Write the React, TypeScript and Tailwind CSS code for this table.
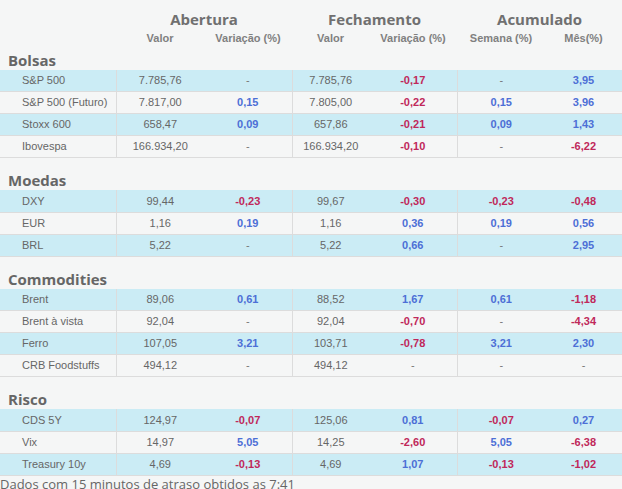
import React from 'react';

type Row = {
  name: string;
  abVal: string;
  abVar: string;
  feVal: string;
  feVar: string;
  sem: string;
  mes: string;
};

const sections: { title: string; rows: Row[] }[] = [
  {
    title: 'Bolsas',
    rows: [
      { name: 'S&P 500', abVal: '7.785,76', abVar: '-', feVal: '7.785,76', feVar: '-0,17', sem: '-', mes: '3,95' },
      { name: 'S&P 500 (Futuro)', abVal: '7.817,00', abVar: '0,15', feVal: '7.805,00', feVar: '-0,22', sem: '0,15', mes: '3,96' },
      { name: 'Stoxx 600', abVal: '658,47', abVar: '0,09', feVal: '657,86', feVar: '-0,21', sem: '0,09', mes: '1,43' },
      { name: 'Ibovespa', abVal: '166.934,20', abVar: '-', feVal: '166.934,20', feVar: '-0,10', sem: '-', mes: '-6,22' },
    ],
  },
  {
    title: 'Moedas',
    rows: [
      { name: 'DXY', abVal: '99,44', abVar: '-0,23', feVal: '99,67', feVar: '-0,30', sem: '-0,23', mes: '-0,48' },
      { name: 'EUR', abVal: '1,16', abVar: '0,19', feVal: '1,16', feVar: '0,36', sem: '0,19', mes: '0,56' },
      { name: 'BRL', abVal: '5,22', abVar: '-', feVal: '5,22', feVar: '0,66', sem: '-', mes: '2,95' },
    ],
  },
  {
    title: 'Commodities',
    rows: [
      { name: 'Brent', abVal: '89,06', abVar: '0,61', feVal: '88,52', feVar: '1,67', sem: '0,61', mes: '-1,18' },
      { name: 'Brent à vista', abVal: '92,04', abVar: '-', feVal: '92,04', feVar: '-0,70', sem: '-', mes: '-4,34' },
      { name: 'Ferro', abVal: '107,05', abVar: '3,21', feVal: '103,71', feVar: '-0,78', sem: '3,21', mes: '2,30' },
      { name: 'CRB Foodstuffs', abVal: '494,12', abVar: '-', feVal: '494,12', feVar: '-', sem: '-', mes: '-' },
    ],
  },
  {
    title: 'Risco',
    rows: [
      { name: 'CDS 5Y', abVal: '124,97', abVar: '-0,07', feVal: '125,06', feVar: '0,81', sem: '-0,07', mes: '0,27' },
      { name: 'Vix', abVal: '14,97', abVar: '5,05', feVal: '14,25', feVar: '-2,60', sem: '5,05', mes: '-6,38' },
      { name: 'Treasury 10y', abVal: '4,69', abVar: '-0,13', feVal: '4,69', feVar: '1,07', sem: '-0,13', mes: '-1,02' },
    ],
  },
];

// variation cell: blue when up, crimson when down, plain dash otherwise
const Change: React.FC<{ v: string; sep?: boolean }> = ({ v, sep }) => {
  const color = v === '-' ? 'text-[#777] font-normal' : v.startsWith('-') ? 'text-[#c0285a] font-bold' : 'text-[#4d6fd6] font-bold';
  return <td className={`text-center ${color} ${sep ? 'border-r border-[#dcdcdc]' : ''}`}>{v}</td>;
};

const Cols = () => (
  <colgroup>
    <col className="w-[116px]" />
    <col className="w-[88px]" />
    <col className="w-[88px]" />
    <col className="w-[77px]" />
    <col className="w-[88px]" />
    <col className="w-[88px]" />
    <col className="w-[77px]" />
  </colgroup>
);

const Section: React.FC<{ title: string; rows: Row[]; first?: boolean }> = ({ title, rows, first }) => (
  <div>
    <h2 className={`${first ? 'pt-[3px]' : 'pt-[12px]'} leading-[20px] pl-2 text-[15px] font-bold text-[#666] font-['Open_Sans',sans-serif]`}>
      {title}
    </h2>
    <table className="w-full table-fixed border-collapse text-[11px] text-[#666] font-['Liberation_Sans',Arial,sans-serif]">
      <Cols />
      <tbody>
        {rows.map((r, i) => (
          <tr key={r.name} className={`h-[22px] border-b border-[#dcdcdc] ${i % 2 === 0 ? 'bg-[#cbecf5]' : 'bg-[#f5f6f6]'}`}>
            <td className="pl-[22px] border-r border-[#dcdcdc] whitespace-nowrap">{r.name}</td>
            <td className="text-center">{r.abVal}</td>
            <Change v={r.abVar} sep />
            <td className="text-center">{r.feVal}</td>
            <Change v={r.feVar} sep />
            <Change v={r.sem} />
            <Change v={r.mes} />
          </tr>
        ))}
      </tbody>
    </table>
  </div>
);

export default function App() {
  return (
    <div className="w-[622px] h-[489px] overflow-hidden bg-[#f5f6f6]">
      <table className="w-full table-fixed border-collapse text-[#707070]">
        <Cols />
        <thead>
          <tr className="h-[30px] align-bottom">
            <th />
            <th colSpan={2} className="text-[15px] leading-[22px] font-bold font-['Open_Sans',sans-serif]">Abertura</th>
            <th colSpan={2} className="text-[15px] leading-[22px] font-bold font-['Open_Sans',sans-serif]">Fechamento</th>
            <th colSpan={2} className="text-[15px] leading-[22px] font-bold font-['Open_Sans',sans-serif]">Acumulado</th>
          </tr>
          <tr className="h-[16px] text-[11px] font-bold text-[#808080] font-['Liberation_Sans',Arial,sans-serif]">
            <th />
            <th>Valor</th>
            <th>Variação (%)</th>
            <th>Valor</th>
            <th>Variação (%)</th>
            <th>Semana (%)</th>
            <th>Mês(%)</th>
          </tr>
        </thead>
      </table>
      {sections.map((s, i) => (
        <Section key={s.title} title={s.title} rows={s.rows} first={i === 0} />
      ))}
      <p className="text-[13px] leading-[17px] text-[#666] font-['Open_Sans',sans-serif]">
        Dados com 15 minutos de atraso obtidos as 7:41
      </p>
    </div>
  );
}
